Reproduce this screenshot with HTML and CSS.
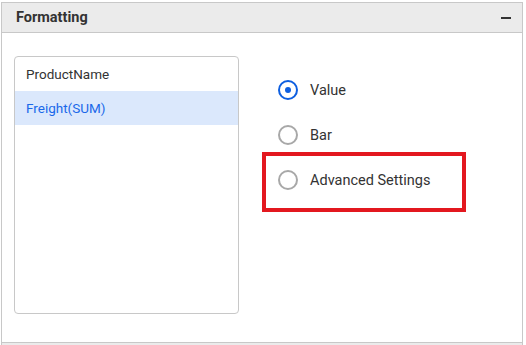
FILE: index.html
```html
<!DOCTYPE html>
<html>
<head>
<meta charset="utf-8">
<link rel="stylesheet" href="styles.css">
</head>
<body>
<div class="panel">
  <div class="panel-header">
    <span class="panel-title">Formatting</span>
    <span class="collapse-icon"></span>
  </div>
  <div class="panel-body">
    <ul class="field-list">
      <li class="field-item">ProductName</li>
      <li class="field-item selected">Freight(SUM)</li>
    </ul>
    <div class="radio-group">
      <label class="radio-item"><span class="radio checked"></span><span class="radio-label">Value</span></label>
      <label class="radio-item"><span class="radio"></span><span class="radio-label">Bar</span></label>
      <label class="radio-item annotated"><span class="radio"></span><span class="radio-label">Advanced Settings</span><span class="annotation"></span></label>
    </div>
  </div>
</div>
<div class="next-header"></div>
</body>
</html>
```

FILE: styles.css
```css
html, body {
  margin: 0;
  padding: 0;
  background: #ffffff;
  font-family: Roboto, "Liberation Sans", sans-serif;
  color: #333333;
}

.panel {
  margin: 2px 3px 0 1px;
  border: 1px solid #c8c8c8;
  height: 339px;
  box-sizing: content-box;
  display: flex;
  flex-direction: column;
}

.panel-header {
  height: 29px;
  background: #ebebeb;
  border-bottom: 1px solid #c8c8c8;
  display: flex;
  align-items: center;
  justify-content: space-between;
  padding: 0 11px 0 14px;
}

.panel-title {
  font-size: 14.5px;
  font-weight: 700;
  color: #333333;
}

.collapse-icon {
  width: 10px;
  height: 2px;
  background: #333333;
}

.panel-body {
  display: flex;
  padding: 23px 12px 0 12px;
}

.field-list {
  list-style: none;
  margin: 0;
  padding: 0;
  width: 223px;
  height: 256px;
  border: 1px solid #c8c8c8;
  border-radius: 4px;
}

.field-item {
  height: 34px;
  line-height: 34px;
  padding-left: 11px;
  font-size: 13.5px;
  color: #333333;
}

.field-item.selected {
  background: #dbe8fc;
  color: #1a68ea;
}

.radio-group {
  display: flex;
  flex-direction: column;
  gap: 25px;
  margin-left: 39px;
  padding-top: 24px;
}

.radio-item {
  display: flex;
  align-items: center;
  height: 20px;
  position: relative;
}

.radio {
  width: 16px;
  height: 16px;
  border: 2px solid #a8a8a8;
  border-radius: 50%;
  box-sizing: content-box;
  display: flex;
  align-items: center;
  justify-content: center;
}

.radio.checked {
  border-color: #0e5fe0;
}

.radio.checked::after {
  content: "";
  width: 6px;
  height: 6px;
  border-radius: 50%;
  background: #0e5fe0;
}

.radio-label {
  margin-left: 12px;
  font-size: 14.5px;
  color: #333333;
}

.annotation {
  position: absolute;
  left: -16px;
  top: -18px;
  width: 204px;
  height: 60px;
  box-sizing: border-box;
  border: 4px solid #e3181f;
}

.next-header {
  height: 3px;
  margin: 0 3px 0 1px;
  background: #ebebeb;
  border-left: 1px solid #c8c8c8;
  border-right: 1px solid #c8c8c8;
}
```
